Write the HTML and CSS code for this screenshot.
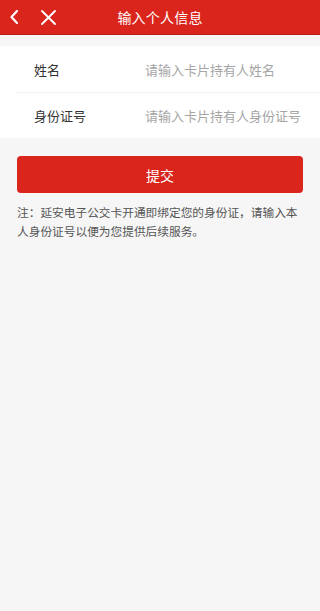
FILE: index.html
```html
<!DOCTYPE html>
<html lang="zh-CN">
<head>
<meta charset="utf-8">
<meta name="viewport" content="width=device-width, initial-scale=1">
<title>输入个人信息</title>
<link rel="stylesheet" href="styles.css">
</head>
<body>
<header class="nav">
  <div class="nav-left">
    <svg class="icon-back" width="10" height="16" viewBox="0 0 10 16"><path d="M8 2 L2.5 8 L8 14" fill="none" stroke="#fff" stroke-width="2.2" stroke-linecap="round" stroke-linejoin="round"/></svg>
    <svg class="icon-close" width="17" height="17" viewBox="0 0 17 17"><path d="M2 2 L15 15 M15 2 L2 15" fill="none" stroke="#fff" stroke-width="1.9" stroke-linecap="round"/></svg>
  </div>
  <h1 class="nav-title">输入个人信息</h1>
</header>
<main class="page">
  <section class="form">
    <label class="row">
      <span class="label">姓名</span>
      <input class="field" type="text" placeholder="请输入卡片持有人姓名">
    </label>
    <label class="row">
      <span class="label">身份证号</span>
      <input class="field" type="text" placeholder="请输入卡片持有人身份证号">
    </label>
  </section>
  <div class="actions">
    <button class="submit" type="button">提交</button>
    <p class="note">注：延安电子公交卡开通即绑定您的身份证，请输入本人身份证号以便为您提供后续服务。</p>
  </div>
</main>
</body>
</html>
```
FILE: styles.css
```css
* { box-sizing: border-box; }
html, body { margin: 0; padding: 0; }
body {
  background: #f6f6f6;
  font-family: "Noto Sans CJK SC", "Noto Sans", sans-serif;
  width: 320px;
  min-height: 611px;
}
.nav {
  position: relative;
  height: 35px;
  background: #da251d;
  border-bottom: 1px solid #b91e17;
  display: flex;
  align-items: center;
  justify-content: center;
}
.nav-left {
  position: absolute;
  left: 0;
  top: 0;
  height: 34px;
  display: flex;
  align-items: center;
  padding-left: 9px;
  gap: 21px;
}
.icon-back { display: block; margin-top: 0; }
.icon-close { display: block; }
.nav-title {
  margin: 0;
  color: #fff;
  font-size: 14px;
  font-weight: normal;
  line-height: 34px;
  letter-spacing: 0.2px;
}
.page { padding-top: 11px; }
.form {
  background: #fff;
}
.row {
  display: flex;
  align-items: center;
  height: 46px;
  margin-left: 16px;
  padding-left: 18px;
}
.row + .row { border-top: 1px solid #f1f1f1; }
.label {
  width: 111px;
  color: #333;
  font-size: 13px;
}
.field {
  flex: 1;
  min-width: 0;
  border: none;
  outline: none;
  background: transparent;
  font-family: inherit;
  font-size: 13px;
  color: #333;
  padding: 0;
}
.field::placeholder { color: #a5a5a5; }
.actions { padding: 18px 17px 0; }
.submit {
  display: block;
  width: 100%;
  height: 37px;
  border: none;
  border-radius: 4px;
  background: #da251d;
  color: #fff;
  font-family: inherit;
  font-size: 14px;
  padding: 0;
}
.note {
  margin: 9px 0 0;
  color: #555;
  font-size: 11.7px;
  line-height: 19px;
}
```
